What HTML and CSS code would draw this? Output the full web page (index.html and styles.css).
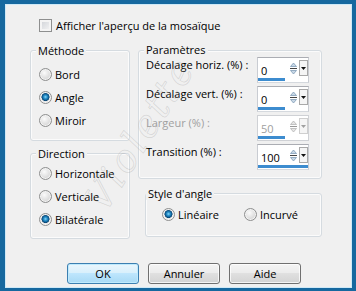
FILE: index.html
```html
<!DOCTYPE html>
<html>
<head>
<meta charset="utf-8">
<link rel="stylesheet" href="styles.css">
</head>
<body>
<div class="dialog">
  <div class="check-row"><span class="checkbox"></span><span>Afficher l'aperçu de la mosaïque</span></div>
  <div class="groups">
    <div class="col-left">
      <div class="group g-method">
        <div class="legend">Méthode</div>
        <div class="radio-row first"><span class="radio"></span>Bord</div>
        <div class="radio-row"><span class="radio on"></span>Angle</div>
        <div class="radio-row"><span class="radio"></span>Miroir</div>
      </div>
      <div class="group g-direction">
        <div class="legend">Direction</div>
        <div class="radio-row first-d"><span class="radio"></span>Horizontale</div>
        <div class="radio-row"><span class="radio"></span>Verticale</div>
        <div class="radio-row"><span class="radio on"></span>Bilatérale</div>
      </div>
    </div>
    <div class="col-right">
      <div class="group g-params">
        <div class="legend">Paramètres</div>
        <div class="param-row first-p">
          <span class="plabel">Décalage horiz. (%) :</span>
          <div class="spin">
            <div class="spin-main">
              <span class="value">0</span>
              <svg class="arrows" width="11" height="14" viewBox="0 0 11 14"><path d="M2.5 5.5 L5.5 2 L8.5 5.5 Z" fill="#c9d8e6" stroke="#7f9cb6" stroke-width="0.8"/><line x1="2" y1="7.5" x2="9" y2="7.5" stroke="#444" stroke-width="1"/><path d="M2.5 9.5 L5.5 13 L8.5 9.5 Z" fill="#c9d8e6" stroke="#7f9cb6" stroke-width="0.8"/></svg>
              <span class="drop"><svg width="5" height="3" viewBox="0 0 5 3"><path d="M0 0 H5 L2.5 3 Z" fill="#111"/></svg></span>
            </div>
            <div class="bar" style="width:54%"></div>
          </div>
        </div>
        <div class="param-row">
          <span class="plabel">Décalage vert. (%) :</span>
          <div class="spin">
            <div class="spin-main">
              <span class="value">0</span>
              <svg class="arrows" width="11" height="14" viewBox="0 0 11 14"><path d="M2.5 5.5 L5.5 2 L8.5 5.5 Z" fill="#c9d8e6" stroke="#7f9cb6" stroke-width="0.8"/><line x1="2" y1="7.5" x2="9" y2="7.5" stroke="#444" stroke-width="1"/><path d="M2.5 9.5 L5.5 13 L8.5 9.5 Z" fill="#c9d8e6" stroke="#7f9cb6" stroke-width="0.8"/></svg>
              <span class="drop"><svg width="5" height="3" viewBox="0 0 5 3"><path d="M0 0 H5 L2.5 3 Z" fill="#111"/></svg></span>
            </div>
            <div class="bar" style="width:54%"></div>
          </div>
        </div>
        <div class="param-row disabled">
          <span class="plabel">Largeur (%) :</span>
          <div class="spin">
            <div class="spin-main">
              <span class="value">50</span>
              <svg class="arrows" width="11" height="14" viewBox="0 0 11 14"><path d="M2.5 5.5 L5.5 2 L8.5 5.5 Z" fill="#e6e6e6" stroke="#b5b5b5" stroke-width="0.8"/><line x1="2" y1="7.5" x2="9" y2="7.5" stroke="#999" stroke-width="1"/><path d="M2.5 9.5 L5.5 13 L8.5 9.5 Z" fill="#e6e6e6" stroke="#b5b5b5" stroke-width="0.8"/></svg>
              <span class="drop"><svg width="5" height="3" viewBox="0 0 5 3"><path d="M0 0 H5 L2.5 3 Z" fill="#a0a0a0"/></svg></span>
            </div>
            <div class="bar" style="width:54%"></div>
          </div>
        </div>
        <div class="param-row">
          <span class="plabel">Transition (%) :</span>
          <div class="spin">
            <div class="spin-main">
              <span class="value">100</span>
              <svg class="arrows" width="11" height="14" viewBox="0 0 11 14"><path d="M2.5 5.5 L5.5 2 L8.5 5.5 Z" fill="#c9d8e6" stroke="#7f9cb6" stroke-width="0.8"/><line x1="2" y1="7.5" x2="9" y2="7.5" stroke="#444" stroke-width="1"/><path d="M2.5 9.5 L5.5 13 L8.5 9.5 Z" fill="#c9d8e6" stroke="#7f9cb6" stroke-width="0.8"/></svg>
              <span class="drop"><svg width="5" height="3" viewBox="0 0 5 3"><path d="M0 0 H5 L2.5 3 Z" fill="#111"/></svg></span>
            </div>
            <div class="bar" style="width:100%"></div>
          </div>
        </div>
      </div>
      <div class="group g-style">
        <div class="legend">Style d'angle</div>
        <div class="style-row">
          <span class="opt first"><span class="radio on"></span>Linéaire</span>
          <span class="opt"><span class="radio"></span>Incurvé</span>
        </div>
      </div>
    </div>
  </div>
  <div class="buttons">
    <div class="btn default">OK</div>
    <div class="btn">Annuler</div>
    <div class="btn">Aide</div>
  </div>
  <div class="watermark">Violette</div>
</div>
</body>
</html>
```

FILE: styles.css
```css
body {
  margin: 0;
  font-family: "Open Sans", "Noto Sans", sans-serif;
  font-size: 11px;
  color: #000;
}

.dialog {
  position: relative;
  width: 356px;
  height: 291px;
  box-sizing: border-box;
  border-style: solid;
  border-color: #16689f;
  border-width: 4px 4px 3px 5px;
  background: #f0f0f0;
  box-shadow: inset 0 0 0 1px #cfe9f7;
  display: flex;
  flex-direction: column;
  overflow: hidden;
}

.check-row {
  display: flex;
  align-items: center;
  gap: 4px;
  height: 15px;
  line-height: 15px;
  margin: 14px 0 0 34px;
}

.checkbox {
  width: 13px;
  height: 13px;
  box-sizing: border-box;
  border: 1px solid #8e8f8f;
  background: linear-gradient(135deg, #cdd0d5, #f7f7f7);
  box-shadow: inset 0 0 0 2px #f4f4f4;
  flex: none;
}

.groups {
  display: flex;
  gap: 8px;
  margin: 17px 0 0 25px;
}

.col-left {
  width: 100px;
  display: flex;
  flex-direction: column;
}

.col-right {
  width: 184px;
  display: flex;
  flex-direction: column;
}

.group {
  box-sizing: border-box;
  border: 1px solid #d5dbe0;
  border-radius: 3px;
  box-shadow: inset 0 0 0 1px #fbfbfb;
  display: flex;
  flex-direction: column;
}

.legend {
  align-self: flex-start;
  margin: -7px 0 0 5px;
  padding: 0 2px;
  background: #f0f0f0;
  line-height: 13px;
}

.g-method { height: 91px; }
.g-direction { height: 86px; margin-top: 12px; }

.radio-row {
  display: flex;
  align-items: center;
  gap: 3px;
  height: 23px;
  padding-left: 8px;
}

.radio-row.first { margin-top: 6px; }
.radio-row.first-d { margin-top: 2px; }

.radio {
  width: 13px;
  height: 13px;
  box-sizing: border-box;
  border-radius: 50%;
  border: 1px solid #8e8f8f;
  background: radial-gradient(circle at 40% 35%, #fbfbfb, #d4d4d4 75%);
  box-shadow: inset 0 0 0 1px #f3f3f3;
  flex: none;
}

.radio.on {
  background: radial-gradient(circle at 50% 45%, #8fd8f6 0, #2d96cf 1.6px, #10639a 3px, #0b4470 3.8px, #e4e4e4 4.3px, #f6f6f6 100%);
}

.g-params { height: 129px; }

.g-params .legend { margin-top: -8px; }

.param-row {
  display: flex;
  align-items: flex-start;
  height: 29px;
  padding-left: 7px;
}

.param-row.first-p { margin-top: 1px; }

.plabel {
  width: 111px;
  margin-top: 1px;
  line-height: 13px;
  flex: none;
}

.spin {
  width: 52px;
  height: 26px;
  box-sizing: border-box;
  border: 1px solid #abadb3;
  border-color: #abadb3 #c9ccd2 #d5d9de #c9ccd2;
  background: #fff;
  display: flex;
  flex-direction: column;
}

.spin-main {
  display: flex;
  align-items: flex-start;
  height: 20px;
}

.value {
  flex: 1;
  margin-top: 6px;
  padding-left: 3px;
  line-height: 14px;
}

.arrows {
  margin-top: 3px;
  flex: none;
}

.drop {
  margin-top: 2px;
  width: 9px;
  height: 16px;
  box-sizing: border-box;
  border: 1px solid #a9a9a9;
  background: #f5f5f5;
  display: flex;
  align-items: center;
  justify-content: center;
  flex: none;
}

.bar {
  height: 3px;
  background: #3d8ccf;
  margin-top: auto;
  margin-bottom: 1px;
}

.param-row.disabled .plabel,
.param-row.disabled .value {
  color: #a0a0a0;
}

.param-row.disabled .spin {
  border-color: #cfd1d5;
}

.param-row.disabled .drop {
  border-color: #cfcfcf;
}

.g-style {
  margin: 14px 0 0 7px;
  height: 44px;
}

.g-style .legend { margin-left: 0; }

.style-row {
  display: flex;
  align-items: center;
  height: 23px;
  margin-top: 3px;
  padding-left: 16px;
}

.opt {
  display: flex;
  align-items: center;
  gap: 3px;
}

.opt.first { width: 82px; }

.buttons {
  display: flex;
  gap: 9px;
  margin: 24px 0 0 62px;
}

.btn {
  width: 72px;
  height: 21px;
  box-sizing: border-box;
  border: 1px solid #707070;
  border-radius: 3px;
  background: linear-gradient(#f4f4f4, #ececec 45%, #e0e0e0 50%, #d3d3d3);
  box-shadow: inset 0 0 0 1px rgba(255, 255, 255, 0.75);
  display: flex;
  align-items: center;
  justify-content: center;
}

.btn.default {
  border-color: #3c7fb1;
  background: linear-gradient(#eaf6fd, #d9f0fc 45%, #bee6fd 50%, #a7d9f5);
  box-shadow: inset 0 0 0 1px #bfeafd;
}

.watermark {
  position: absolute;
  left: 15px;
  top: 108px;
  width: 240px;
  height: 44px;
  line-height: 44px;
  text-align: center;
  transform: rotate(-58deg);
  font-family: "DejaVu Serif", serif;
  font-style: italic;
  font-size: 38px;
  letter-spacing: 3px;
  color: transparent;
  -webkit-text-stroke: 0.7px rgba(150, 150, 150, 0.3);
  pointer-events: none;
}
```
